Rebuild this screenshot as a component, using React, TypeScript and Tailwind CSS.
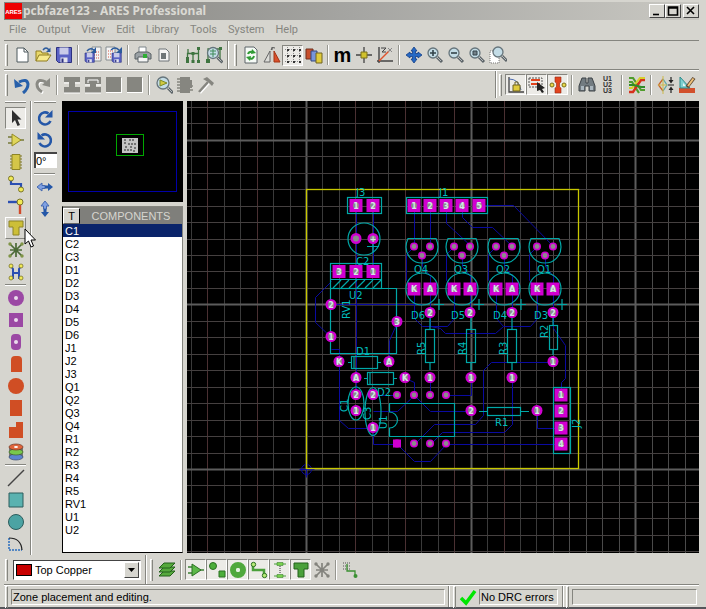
import { useState } from 'react';
import type { ReactNode } from 'react';
import clsx from 'clsx';

const components = [
  'C1', 'C2', 'C3', 'D1', 'D2', 'D3', 'D4', 'D5', 'D6', 'J1', 'J2', 'J3',
  'Q1', 'Q2', 'Q3', 'Q4', 'R1', 'R2', 'R3', 'R4', 'R5', 'RV1', 'U1', 'U2',
];

const menus = ['File', 'Output', 'View', 'Edit', 'Library', 'Tools', 'System', 'Help'];

const Icon = ({ children }: { children: ReactNode }) => (
  <svg viewBox="0 0 18 18" className="size-[18px] shrink-0" fill="none" aria-hidden="true">
    {children}
  </svg>
);

/* ---------- shared icon parts ---------- */

const Lens = ({ x = 7, y = 7, r = 5 }: { x?: number; y?: number; r?: number }) => (
  <>
    <path d={`M${x + r - 1} ${y + r - 1}L${x + r + 4} ${y + r + 4}`} stroke="#5c6468" strokeWidth="3" />
    <path d={`M${x + r - 1} ${y + r - 1}L${x + r + 3} ${y + r + 3}`} stroke="#b4babc" />
    <circle cx={x} cy={y} r={r} fill="#c3dce6" stroke="#66757c" strokeWidth="1.3" />
  </>
);

const Floppy = ({ x, y, s }: { x: number; y: number; s: number }) => (
  <g transform={`translate(${x} ${y}) scale(${s})`}>
    <path d="M0 0H15V15H2L0 13Z" fill="#5a62c4" stroke="#2c3180" />
    <path d="M3 0H12V7H3Z" fill="#c9cbe8" />
    <path d="M4 10H11V15H4Z" fill="#e4e4ee" />
    <path d="M5 11H7V15H5Z" fill="#2c3180" />
  </g>
);

const RotateArrow = () => (
  <>
    <path d="M14.5 12A6 6 0 1 1 12.5 4.5" stroke="#2457a8" strokeWidth="2.6" />
    <path d="M16.5 1V8.5H9Z" fill="#2457a8" />
  </>
);

const Tee = ({ fill, stroke }: { fill: string; stroke: string }) => (
  <path d="M2 2H16V8H12V16H6V8H2Z" fill={fill} stroke={stroke} />
);

const Ratsnest = ({ color, dot }: { color: string; dot: string }) => (
  <>
    <path d="M3 3L15 15M15 3L3 15M9 2V16M3 9H15" stroke={color} strokeWidth="1.7" />
    {[[3, 3], [15, 3], [3, 15], [15, 15]].map(([x, y]) => (
      <circle key={`${x}-${y}`} cx={x} cy={y} r="1.7" fill={dot} />
    ))}
  </>
);

const Block = () => (
  <Icon>
    <path d="M1 2H17V17H1Z" fill="#fff" />
    <path d="M1 1H16V16H1Z" fill="#868680" />
  </Icon>
);

/* ---------- icons ---------- */

const icons: Record<string, ReactNode> = {
  'New layout': <Icon><path d="M4 2H11L15 6V16H4Z" fill="#fff" stroke="#4d585c" /><path d="M11 2V6H15" stroke="#4d585c" /></Icon>,
  'Open layout': (
    <Icon>
      <path d="M2 15V5H7L8 7H14V9" fill="#e9d86a" stroke="#8f7d20" />
      <path d="M2 15L5 9H17L13 15Z" fill="#f7ea8c" stroke="#8f7d20" />
      <path d="M9 4Q12 0 15 4" stroke="#2b5a9c" strokeWidth="1.4" /><path d="M16.5 1.5V6H12Z" fill="#2b5a9c" />
    </Icon>
  ),
  'Save layout': <Icon><Floppy x={1.5} y={1.5} s={1} /></Icon>,
  'Import region': (
    <Icon>
      <path d="M8 1H17V15H8Z" fill="#f4f4f4" stroke="#858c90" /><path d="M10 6H16M10 9H16M10 12H16" stroke="#d65442" strokeDasharray="1 1" />
      <Floppy x={1} y={7} s={0.62} /><path d="M3 5Q6 1 10 4" stroke="#2b5a9c" strokeWidth="1.5" /><path d="M12 1V7H7Z" fill="#2b5a9c" />
    </Icon>
  ),
  'Export region': (
    <Icon>
      <path d="M1 1H10V14H1Z" fill="#f4f4f4" stroke="#858c90" /><path d="M3 5H9M3 8H9M3 11H9" stroke="#d65442" strokeDasharray="1 1" />
      <Floppy x={7} y={7} s={0.62} /><path d="M6 4Q10 0 14 4" stroke="#2b5a9c" strokeWidth="1.5" /><path d="M17 1V7H11Z" fill="#2b5a9c" />
    </Icon>
  ),
  Print: (
    <Icon>
      <path d="M5 1H12V7H5Z" fill="#fff" stroke="#7c858a" /><path d="M1 8L4 6H14L17 8V13H1Z" fill="#9aa1a5" stroke="#596064" />
      <path d="M4 11H14V16H4Z" fill="#f6f6f6" stroke="#596064" /><path d="M9 8H13V12H9Z" fill="#2fae35" />
    </Icon>
  ),
  'Set print area': <Icon><path d="M4 3H11L14 6V15H4Z" fill="#f4f4f4" stroke="#6e7578" /><path d="M6 7H11V13H6Z" fill="#6e7578" /></Icon>,
  'Design explorer': (
    <Icon>
      <path d="M3.5 15V7.5H14.5V15M9 7.5V15M4 7V3M14.5 7V3" stroke="#3e7440" strokeWidth="1.3" />
      <path d="M2 11H5V14H2ZM2 14H5V17H2ZM7.5 14H10.5V17H7.5ZM13 14H16V17H13ZM13 1H16V4H13ZM7.5 6H10.5V9H7.5Z" fill="#3e7440" />
    </Icon>
  ),
  'Search netlist': (
    <Icon>
      <path d="M3 16V3H15V14" stroke="#3e7440" strokeWidth="1.3" /><path d="M1 13H5V17H1ZM14 1H17V4H14Z" fill="#3e7440" />
      <Lens x={8} y={7} r={5.5} /><path d="M5 5H11M5 8H11M8 3V11" stroke="#3e8a58" />
    </Icon>
  ),
  Redraw: (
    <Icon>
      <path d="M3 1H12L15 4V17H3Z" fill="#f6faf6" stroke="#5c6468" />
      <path d="M6 8Q7 5 11 6M12 10Q11 14 7 12" stroke="#2f9a34" strokeWidth="2" /><path d="M10 3L14 7L9 8ZM8 15L4 11L9 10Z" fill="#2f9a34" />
    </Icon>
  ),
  'Flip board': (
    <Icon>
      <path d="M7 5V16H1Z" fill="#dcdcd8" stroke="#666" /><path d="M11 5V16H17Z" fill="#d9502b" stroke="#a33415" /><path d="M8 4Q9 0 12 2M9 4V1" stroke="#555" />
    </Icon>
  ),
  Grid: (
    <Icon>
      <path d="M1 3.5H17M1 9.5H17M1 15.5H17M3.5 1V17M9.5 1V17M15.5 1V17" stroke="#8a8a8a" strokeDasharray="1 1" />
      <path d="M3 3H5V5H3ZM9 3H11V5H9ZM15 3H17V5H15ZM3 9H5V11H3ZM9 9H11V11H9ZM15 9H17V11H15ZM3 15H5V17H3ZM9 15H11V17H9ZM15 15H17V17H15Z" fill="#333" />
    </Icon>
  ),
  'Layer colours': (
    <Icon>
      <path d="M1 3H8V13H1Z" fill="#c8502c" stroke="#70301e" /><path d="M6 5H12V15H6Z" fill="#7895da" stroke="#34487e" /><path d="M11 7H17V17H11Z" fill="#e0cb3c" stroke="#6e6220" />
    </Icon>
  ),
  Metric: <span className="text-[20px] leading-[18px] font-bold text-black">m</span>,
  'Set origin': <Icon><path d="M9 1V17M1 9H17" stroke="#444" strokeWidth="1.3" /><path d="M6 6H12V12H6Z" fill="#d1c22c" stroke="#7a701a" /></Icon>,
  'Polar coordinates': (
    <Icon>
      <path d="M3 1V17M1 15H17" stroke="#444" strokeWidth="1.4" /><path d="M3 15L13 5" stroke="#e0532c" strokeWidth="1.4" />
      <path d="M5 2H10L6 6H10" stroke="#444" /><path d="M12 2L16 6M16 2L12 6" stroke="#888" />
    </Icon>
  ),
  Pan: <Icon><path d="M9 1L12 5H10.5V7.5H13V6L17 9L13 12V10.5H10.5V13H12L9 17L6 13H7.5V10.5H5V12L1 9L5 6V7.5H7.5V5H6Z" fill="#2669c4" stroke="#143f86" strokeWidth=".8" /></Icon>,
  'Zoom in': <Icon><Lens /><path d="M4 7H10M7 4V10" stroke="#33434a" strokeWidth="1.6" /></Icon>,
  'Zoom out': <Icon><Lens /><path d="M4 7H10" stroke="#33434a" strokeWidth="1.6" /></Icon>,
  'Zoom all': <Icon><Lens /><path d="M5 5H9V9H5Z" fill="#728088" stroke="#33434a" /></Icon>,
  'Zoom area': <Icon><path d="M1 5H10V17H1Z" fill="#fff" stroke="#777" strokeDasharray="1 1" /><Lens x={9} y={6} /></Icon>,
  Undo: <Icon><path d="M6 6Q14 2 15 8Q15 13 10 17" stroke="#2760aa" strokeWidth="3" /><path d="M1 3L2 12L10 10Z" fill="#2760aa" /></Icon>,
  Redo: <Icon><path d="M13 7Q5 3 4 9Q4 14 9 17" stroke="#fff" strokeWidth="3" /><path d="M12 6Q4 2 3 8Q3 13 8 16" stroke="#8a8a84" strokeWidth="3" /><path d="M16 2L16 11L8 9Z" fill="#8a8a84" /></Icon>,
  'Block copy': <Icon><path d="M1 1H17V6H12V11H17V17H1V11H6V6H1Z" fill="#868680" /><path d="M1 7H6M12 7H17M1 17H17" stroke="#fff" /></Icon>,
  'Block move': <Icon><path d="M1 1H17V8H12V11H17V17H1V11H6V8H1Z" fill="#868680" /><path d="M4 7V4H14V7M1 9H6M12 9H17M1 17H17" stroke="#fff" /></Icon>,
  'Block rotate': <Block />,
  'Block delete': <Block />,
  'Pick parts': <Icon><Lens x={8} y={7} r={6} /><path d="M5 4V10L12 7Z" fill="#d1c940" stroke="#7b8a2a" /></Icon>,
  'Make package': <Icon><path d="M4 1H14V4H16V12H14V17H4Z" fill="#868680" /><path d="M1 3H5M1 6H5M1 9H5M1 12H5M1 15H5M13 14H17M13 10H17" stroke="#868680" strokeWidth="1.4" /></Icon>,
  Decompose: <Icon><path d="M3 17L12 7" stroke="#fff" strokeWidth="2.5" /><path d="M2 16L11 6" stroke="#868680" strokeWidth="2.5" /><path d="M6 3L10 1L17 7L15 10L11 6Z" fill="#868680" /></Icon>,
  'Trace angle lock': (
    <Icon><path d="M2 1V16H17" stroke="#444" strokeWidth="1.3" /><path d="M2 3Q12 3 14 14" stroke="#4c6bb0" /><path d="M6 9H13V15H6Z" fill="#e0cb3c" stroke="#6e6220" /><path d="M8 9V6H11V9" stroke="#6e6220" /></Icon>
  ),
  'Auto track necking': (
    <Icon><path d="M1 2H14V11H1Z" stroke="#555" strokeDasharray="2 1" /><path d="M3 4H12M3 8H12" stroke="#e2441e" strokeWidth="2" /><path d="M9 6L17 12L14 13L16 16L14 17L12 14L9 15Z" fill="#222" /></Icon>
  ),
  'Auto trace selection': (
    <Icon><path d="M6 1H12V6L10.5 7V11L12 12V17H6V12L7.5 11V7L6 6Z" fill="#e2441e" stroke="#972a10" strokeWidth=".6" /><circle cx="3" cy="9" r="2" fill="#e8d94a" stroke="#7a701a" /><circle cx="15" cy="9" r="2" fill="#e8d94a" stroke="#7a701a" /></Icon>
  ),
  'Search and tag': (
    <Icon><path d="M4 2H8V7H10V2H14L17 10V15H11V10H7V15H1V10Z" fill="#727b80" stroke="#3c4246" /><path d="M3 10H6V14H3ZM12 10H15V14H12Z" fill="#aab6be" /></Icon>
  ),
  'Auto name': (
    <span className="flex flex-col text-[7px] leading-[6px] font-bold text-[#333]"><span>U1</span><span>U2</span><span>U3</span></span>
  ),
  'Auto router': (
    <Icon>
      <path d="M1 2H5L13 14H17M1 6H4L11 17" stroke="#4f9c2c" strokeWidth="2.2" /><path d="M1 16H5L13 4H17" stroke="#d6311c" strokeWidth="2.4" />
      <path d="M1 12H4L12 2H17" stroke="#d7cf2b" strokeWidth="2" /><path d="M1 9H6L13 11H17" stroke="#2f8c28" strokeWidth="2" />
    </Icon>
  ),
  'Design rule check': (
    <Icon><path d="M6 3L1.5 9L6 15" stroke="#c8652c" strokeWidth="1.3" /><path d="M6 3L10 9L6 15" stroke="#62a8a6" strokeWidth="1.3" /><path d="M6 0V18M1 9H10" stroke="#ccb94a" /><path d="M14 1V5M14 13V17M11 9H17" stroke="#222" strokeWidth="1.2" /><path d="M11.5 4H16.5L14 7.5ZM11.5 14H16.5L14 10.5Z" fill="#222" /></Icon>
  ),
  'Pre-production check': (
    <Icon><path d="M1 12H17V17H1Z" fill="#d2502c" /><path d="M2 1V12H12Z" fill="#7ed1cf" stroke="#2c8b8b" /><path d="M5 7V10H8Z" fill="#e8f6f6" /><path d="M16 2L9 11" stroke="#5a4530" strokeWidth="3.6" /><path d="M15.5 2.5L10 10" stroke="#efc179" strokeWidth="2" /></Icon>
  ),

  /* left toolbox */
  Selection: <Icon><path d="M5 1V14L8 11L10.5 17L13 16L10.5 10.5H14.5Z" fill="#2e2e2e" /></Icon>,
  Component: <Icon><path d="M1 6H5M1 12H5M13 9H17" stroke="#777a3a" strokeWidth="1.3" /><path d="M5 3V15L14 9Z" fill="#e0d65a" stroke="#938a26" /></Icon>,
  Package: <Icon><path d="M3 3H15M3 6H15M3 9H15M3 12H15M3 15H15" stroke="#7c7626" strokeWidth="1.2" /><path d="M5 1.5H13V16.5H5Z" fill="#d4c648" stroke="#8d8426" /></Icon>,
  Track: <Icon><path d="M4 3V9H14V15" stroke="#2b4fb2" strokeWidth="2.2" /><circle cx="4" cy="3.5" r="2.5" fill="#f1ea56" stroke="#7a742a" /><circle cx="14" cy="14.5" r="2.5" fill="#f1ea56" stroke="#7a742a" /></Icon>,
  Via: <Icon><path d="M1 5H13" stroke="#2b4fb2" strokeWidth="2.4" /><path d="M13 6V17" stroke="#d14a2a" strokeWidth="2.4" /><circle cx="13" cy="5" r="3" fill="#f1ea56" stroke="#7a742a" /></Icon>,
  Zone: <Icon><Tee fill="#cdbf37" stroke="#8d8426" /></Icon>,
  Ratsnest: <Icon><Ratsnest color="#4b6a37" dot="#7f9445" /></Icon>,
  'Connectivity highlight': (
    <Icon>
      <path d="M4 3L6 6V16M14 3L12 6V16M6 10H12" stroke="#2b4fb2" strokeWidth="2" />
      {[[4, 3], [14, 3], [4, 15], [14, 15]].map(([x, y]) => <circle key={`${x}${y}`} cx={x} cy={y} r="2" fill="#f1ea56" stroke="#7a742a" strokeWidth=".8" />)}
    </Icon>
  ),
  'Round pad': <Icon><circle cx="9" cy="9" r="8" fill="#9b48a4" /><circle cx="9" cy="9" r="2" fill="#eadcec" /></Icon>,
  'Square pad': <Icon><path d="M2 2H16V16H2Z" fill="#9b48a4" /><circle cx="9" cy="9" r="2" fill="#eadcec" /></Icon>,
  'DIL pad': <Icon><rect x="4" y="1" width="10" height="16" rx="4" fill="#9b48a4" /><circle cx="9" cy="9" r="2" fill="#eadcec" /></Icon>,
  'Edge pad': <Icon><path d="M4 17V5Q4 1 8 1H11Q15 1 15 5V17Z" fill="#d04e24" /></Icon>,
  'Round SMT pad': <Icon><circle cx="9" cy="9" r="8" fill="#d04e24" /></Icon>,
  'Rectangular SMT pad': <Icon><path d="M3 1H15V17H3Z" fill="#d04e24" /></Icon>,
  'Polygonal SMT pad': <Icon><path d="M2 17V6H9V1H16V17Z" fill="#d04e24" /></Icon>,
  Padstack: (
    <Icon>
      <path d="M2 14V5H16V14" fill="#777" /><ellipse cx="9" cy="14" rx="7" ry="3" fill="#5d84cf" stroke="#3a4a6c" strokeWidth=".7" />
      <ellipse cx="9" cy="9" rx="7" ry="3" fill="#78c84c" stroke="#41602c" strokeWidth=".7" /><ellipse cx="9" cy="4" rx="7" ry="3" fill="#e0653c" stroke="#713722" strokeWidth=".7" /><ellipse cx="9" cy="4" rx="2" ry="1" fill="#fff" />
    </Icon>
  ),
  Line: <Icon><path d="M1 17L17 1" stroke="#444" strokeWidth="1.5" /></Icon>,
  Box: <Icon><path d="M2 2H16V16H2Z" fill="#5ab2b0" stroke="#2c5c5c" /></Icon>,
  Circle: <Icon><circle cx="9" cy="9" r="7.5" fill="#4ba3a3" stroke="#2c5c5c" /></Icon>,
  Arc: <Icon><path d="M2 3V15H15" stroke="#2a6ec0" strokeWidth="1.5" strokeDasharray="2 1" /><path d="M2 3Q14 3 15 15" stroke="#222" strokeWidth="1.2" /></Icon>,

  /* rotation column */
  'Rotate clockwise': <Icon><RotateArrow /></Icon>,
  'Rotate anti-clockwise': <Icon><g transform="translate(18 0) scale(-1 1)"><RotateArrow /></g></Icon>,
  'Mirror X': <Icon><path d="M1 9L6 5V7.5H9V10.5H6V13Z" fill="#7fa0e2" stroke="#4468b0" /><path d="M17 9L12 5V7.5H9V10.5H12V13Z" fill="#2457a8" /></Icon>,
  'Mirror Y': <Icon><path d="M9 1L5 6H7.5V9H10.5V6H13Z" fill="#7fa0e2" stroke="#4468b0" /><path d="M9 17L5 12H7.5V9H10.5V12H13Z" fill="#2457a8" /></Icon>,

  /* selection filter */
  Layers: (
    <Icon>
      {[12, 8, 4].map((y) => <path key={y} d={`M1 ${y + 3}L6 ${y - 2}H17L12 ${y + 3}Z`} fill="#55a83c" stroke="#22601a" />)}
    </Icon>
  ),
  'Filter components': <Icon><path d="M1 6H6M1 12H6M13 9H17" stroke="#3b8034" strokeWidth="1.3" /><path d="M5 3V15L14 9Z" fill="#5cb848" stroke="#2b7022" /></Icon>,
  'Filter graphics': <Icon><circle cx="5" cy="5" r="3.5" fill="#4cae3a" stroke="#2b7022" /><path d="M11 10H17V16H11Z" fill="#4cae3a" stroke="#2b7022" /></Icon>,
  'Filter pads': <Icon><circle cx="9" cy="9" r="5" stroke="#4fa83c" strokeWidth="6" /><circle cx="9" cy="9" r="2" fill="#e4f2e0" /></Icon>,
  'Filter tracks': <Icon><path d="M3 4V9H14V14" stroke="#4aa03a" strokeWidth="2.5" /><circle cx="3.5" cy="3.5" r="2.2" fill="#b7ea78" stroke="#2b7022" /><circle cx="14.5" cy="14.5" r="2.2" fill="#b7ea78" stroke="#2b7022" /></Icon>,
  'Filter vias': <Icon><path d="M3 3H15M3 15H15" stroke="#4aa03a" strokeWidth="1.2" /><path d="M6 1.5H12V4.5H6ZM6 13.5H12V16.5H6Z" fill="#79d24e" stroke="#2b7022" strokeWidth=".5" /><path d="M9 5V13" stroke="#333" strokeDasharray="1 1" /></Icon>,
  'Filter zones': <Icon><Tee fill="#4aa03a" stroke="#22601a" /></Icon>,
  'Filter ratsnest': <Icon><Ratsnest color="#83837d" dot="#83837d" /></Icon>,
  'Track route': <Icon><path d="M1 2H9M1 5H9M1 8H9" stroke="#555" strokeDasharray="1 1" /><path d="M5 3V10H13V14" stroke="#3b9032" strokeWidth="1.3" /><circle cx="13.5" cy="15" r="2" fill="#3b9032" /></Icon>,
};

/* ---------- chrome ---------- */

const ToolButton = ({ name, pressed, raised, tall }: { name: string; pressed?: boolean; raised?: boolean; tall?: boolean }) => (
  <button
    type="button"
    title={name}
    aria-label={name}
    aria-pressed={pressed}
    className={clsx(
      'flex w-[21px] shrink-0 items-center justify-center border',
      tall ? 'h-[22px]' : 'h-[21px]',
      pressed && 'border-t-[#85857f] border-r-white border-b-white border-l-[#85857f] bg-[#ecebe7]',
      raised && 'border-t-white border-r-[#85857f] border-b-[#85857f] border-l-white',
      !pressed && !raised && 'border-transparent',
    )}
  >
    {icons[name]}
  </button>
);

const Grip = () => (
  <span className="mr-[3px] ml-px h-[22px] w-[3px] shrink-0 border-t border-r border-l border-t-white border-r-[#85857f] border-l-white" />
);

const Sep = () => (
  <span className="mx-[3px] h-[20px] w-[2px] shrink-0 border-r border-l border-r-white border-l-[#96968f]" />
);

const Divider = () => (
  <span className="w-[2px] shrink-0 self-stretch border-r border-l border-r-white border-l-[#85857f]" />
);

const HSep = () => (
  <span className="my-px h-[2px] w-[21px] border-t border-b border-t-[#85857f] border-b-white" />
);

/* '|' inserts a separator, a leading '*' draws the button pushed in */
const Tools = ({ names }: { names: string[] }) => (
  <>
    {names.map((name, i) =>
      name === '|' ? (
        <Sep key={i} />
      ) : (
        <ToolButton key={i} name={name.replace('*', '')} pressed={name.startsWith('*')} />
      ),
    )}
  </>
);

const TitleBar = () => (
  <header className="flex h-[18px] items-center bg-linear-to-r from-[#84837e] via-[#a5a5a2] to-[#c9c8c2] pl-px">
    <svg viewBox="0 0 17 16" className="h-4 w-[17px] shrink-0" aria-hidden="true">
      <rect width="17" height="16" fill="#e00" />
      <text x="8.5" y="10.5" textAnchor="middle" fontSize="6" fontWeight="bold" fill="#fff" fontFamily="Liberation Sans, sans-serif">ARES</text>
    </svg>
    <h1 className="ml-px flex-1 truncate font-['Noto_Sans',sans-serif] text-[12px] leading-4 font-bold text-[#dad9d3]">
      pcbfaze123 - ARES Professional
    </h1>
    <div className="flex">
      {[
        ['Minimize', 'M3 9.5H9'],
        ['Maximize', 'M2.5 2H11.5V10H2.5ZM2 3H12'],
        ['Close', 'M3 2L10 9M10 2L3 9'],
      ].map(([label, d]) => (
        <button
          key={label}
          type="button"
          aria-label={label}
          className={clsx(
            'h-[14px] w-4 border border-t-white border-r-[#444] border-b-[#444] border-l-white bg-[#d6d5cf]',
            label === 'Close' && 'ml-[2px]',
          )}
        >
          <svg viewBox="0 0 14 12" className="h-3 w-[14px]" fill="none" stroke="#000" strokeWidth="1.6">
            <path d={d} />
          </svg>
        </button>
      ))}
    </div>
  </header>
);

/* ---------- board ---------- */

const traces = [
  'M356 206V394', 'M373 206V271', 'M331 304H422', 'M331 281L315 297V322L331 337',
  'M414 206V246', 'M430 206V246', 'M446 206V223L471 246', 'M462 206V217L472 227H492L512 246',
  'M479 205H513L553 246', 'M414 289V318L422 326H447L454 318V289', 'M496 289V318L503 326H530L537 318V289',
  'M397 322L389 340V361', 'M331 349H339V420L348 428H373V444H397L414 461H430L446 444',
  'M405 378L414 382V395L397 411H373', 'M414 395L430 411H471', 'M430 378V395', 'M373 395H397',
  'M414 444L434 424H475L483 415V370L491 362H553', 'M430 444L442 432H504L512 424V378', 'M446 444H561',
  'M446 395H471V378', 'M537 411V428H561', 'M561 395V382L565 378V345L553 328V313', 'M430 313V326L440 328L445 333H495L503 326',
];

const transistors = [
  { x: 422, q: 'Q4', d: 'D6' },
  { x: 462, q: 'Q3', d: 'D5' },
  { x: 504, q: 'Q2', d: 'D4' },
  { x: 545, q: 'Q1', d: 'D3' },
];

const Pad = ({ x, y, n, square, small }: { x: number; y: number; n?: string; square?: boolean; small?: boolean }) => (
  <g>
    {square ? (
      <rect x={x - 6.5} y={y - 6.5} width="13" height="13" fill="#d000d0" />
    ) : (
      <circle cx={x} cy={y} r={small ? 4 : 5.5} fill="#d000d0" />
    )}
    <circle cx={x} cy={y} r={small ? 2.4 : 3} fill="#8b8b8b" />
    {n && (
      <text x={x} y={y + 3} textAnchor="middle" fontSize="8" fontWeight="bold" fill="#d6e6e6">{n}</text>
    )}
  </g>
);

const Label = ({ x, y, text, up }: { x: number; y: number; text: string; up?: boolean }) => (
  <text x={x} y={y} fontSize="10" fill="#00bcbc" transform={up ? `rotate(-90 ${x} ${y})` : undefined}>{text}</text>
);

const Board = () => {
  const cols = Array.from({ length: 32 }, (_, i) => i - 7);
  const rows = Array.from({ length: 29 }, (_, i) => i - 22);

  return (
    <svg
      viewBox="187 101 512 452"
      preserveAspectRatio="xMidYMid slice"
      className="block h-full w-full bg-black font-['DejaVu_Sans',sans-serif]"
      fill="none"
      role="img"
      aria-label="Board layout"
    >
      {cols.map((i) => (
        <path key={i} d={`M${306.5 + Math.round(i * 16.46)} 101V553`} stroke={i % 10 === 0 ? '#5c5c5c' : i > 14 ? '#4a4a4a' : i % 3 === 0 ? '#4a3032' : '#3a3a3a'} strokeWidth={i % 10 === 0 ? 2 : 1} />
      ))}
      {rows.map((i) => (
        <path key={i} d={`M187 ${469.5 + Math.round(i * 16.46)}H699`} stroke={i % 10 === 0 ? '#5c5c5c' : '#454040'} strokeWidth={i % 10 === 0 ? 2 : 1} />
      ))}

      <g stroke="#0a0aa0" transform="translate(.5 .5)">
        {traces.map((d) => <path key={d} d={d} />)}
        {transistors.map(({ x }) => (
          <path key={x} d={`M${x - 8} 246L${x - 16} 254V280L${x - 8} 289M${x} 256V266L${x + 8} 276V313`} />
        ))}
        <circle cx="306" cy="469" r="5" />
        <path d="M299 469H314M306 462V477" />
      </g>

      <rect x="306.5" y="189.5" width="272" height="279" stroke="#c8c800" strokeWidth="1.3" />

      <g stroke="#00a8a8" strokeWidth="1.2">
        <rect x="347.5" y="197.5" width="34" height="16" />
        <rect x="406.5" y="197.5" width="81" height="16" />
        <circle cx="364" cy="239" r="16" />
        <path d="M367 246.5H379M373 241V252" />
        <rect x="330.5" y="263.5" width="51" height="25" />
        <path d="M331 279.5H381M333 288L341 280M341 288L349 280M349 288L357 280M357 288L365 280M365 288L373 280M373 288L381 280" />
        <path d="M330.5 289V353.5H396.5V288.5H381" />
        <rect x="351.5" y="356.5" width="26" height="12" />
        <path d="M354 356V369M348 362.5H351M377 362.5H381" />
        <rect x="367.5" y="372.5" width="26" height="12" />
        <path d="M370 372V385M364 378.5H367M393 378.5H397" />
        <ellipse cx="356" cy="403.5" rx="8" ry="16.5" />
        <ellipse cx="373" cy="411.5" rx="8" ry="24" />
        <path d="M389.5 403.5H454.5V436.5H389.5V428A8 8 0 0 0 389.5 412Z" />
        <rect x="425.5" y="329.5" width="9" height="33" />
        <rect x="466.5" y="329.5" width="9" height="33" />
        <rect x="507.5" y="329.5" width="9" height="33" />
        <rect x="549.5" y="325.5" width="8" height="24" />
        <path d="M430 318V329M430 362V370M471 318V329M471 362V370M512 318V329M512 362V370M553 318V325M553 349V355" />
        <rect x="487.5" y="407.5" width="33" height="8" />
        <path d="M479 411.5H487M521 411.5H529" />
        <rect x="553.5" y="387.5" width="17" height="66" />
        {transistors.map(({ x }) => (
          <g key={x}>
            <path d={`M${x - 14} 238.5H${x + 14}Q${x + 16} 243 ${x + 16} 247A16 16 0 0 1 ${x - 16} 247Q${x - 16} 243 ${x - 14} 238.5Z`} />
            <circle cx={x} cy="289" r="16" />
            <path d={`M${x + 12} 304.5H${x + 22}M${x + 17} 299V310`} />
          </g>
        ))}
      </g>

      {['1', '2'].map((n, i) => <Pad key={n} x={356 + i * 17} y={205.5} n={n} square />)}
      {[414, 430, 446, 462, 479].map((x, i) => <Pad key={x} x={x} y={205.5} n={`${i + 1}`} square />)}
      {[339, 356, 373].map((x, i) => <Pad key={x} x={x} y={271.5} n={`${3 - i}`} square />)}
      {[395, 411, 428, 444].map((y, i) => <Pad key={y} x={561} y={y} n={`${i + 1}`} square />)}
      <Pad x={356} y={238.5} />
      <Pad x={373} y={238.5} n="+" />
      <Pad x={331} y={304.5} n="2" />
      <Pad x={397} y={321.5} n="3" />
      <Pad x={331} y={336.5} n="1" />
      <Pad x={339} y={361.5} n="K" />
      <Pad x={389} y={361.5} n="A" />
      <Pad x={356} y={377.5} n="A" />
      <Pad x={405} y={377.5} n="K" />
      <Pad x={356} y={394.5} n="2" />
      <Pad x={356} y={410.5} n="1" />
      <Pad x={373} y={394.5} n="2" />
      <Pad x={373} y={427.5} n="1" />
      <Pad x={471} y={410.5} n="2" />
      <Pad x={537} y={410.5} n="1" />
      {[430, 471, 512].map((x) => <Pad key={x} x={x} y={377.5} n="1" />)}
      <Pad x={553} y={361.5} n="1" />
      {[397, 414, 430, 446].map((x) => (
        <g key={x}>
          <Pad x={x} y={395} small />
          <Pad x={x} y={443.5} small />
        </g>
      ))}
      <rect x="395" y="441.5" width="4" height="4" stroke="#d000d0" strokeWidth="4" />
      {transistors.map(({ x, q, d }) => (
        <g key={x}>
          <Pad x={x - 8} y={246.5} small />
          <Pad x={x + 8} y={246.5} small />
          <Pad x={x} y={255.5} small />
          <Pad x={x - 8} y={289} n="K" square />
          <Pad x={x + 8} y={289} n="A" square />
          <Pad x={x + 8} y={312.5} n="2" />
          <Label x={x - 8} y={273} text={q} />
          <Label x={x - 11} y={319} text={d} />
        </g>
      ))}

      <Label x={356} y={196} text="J3" />
      <Label x={439} y={196} text="J1" />
      <Label x={356} y={265} text="C2" />
      <Label x={349} y={299} text="U2" />
      <Label x={356} y={355} text="D1" />
      <Label x={377} y={396} text="D2" />
      <Label x={495} y={426} text="R1" />
      <Label x={350} y={319} text="RV1" up />
      <Label x={348} y={412} text="C1" up />
      <Label x={371} y={420} text="C3" up />
      <Label x={387} y={429} text="U1" up />
      <Label x={425} y={355} text="R5" up />
      <Label x={466} y={355} text="R4" up />
      <Label x={507} y={355} text="R3" up />
      <Label x={548} y={338} text="R2" up />
      <Label x={580} y={428} text="J2" up />
    </svg>
  );
};

const Overview = () => (
  <svg viewBox="0 0 121 101" className="block h-[101px] w-full bg-black" fill="none" role="img" aria-label="Overview">
    <rect x="6.5" y="10.5" width="108" height="80" stroke="#0000a8" />
    <rect x="54.5" y="33.5" width="27" height="21" stroke="#00a800" />
    <rect x="60" y="37" width="16" height="15" fill="#c4c4c4" />
    <path d="M62 39H65M67 39H72M62 42H64M66 43H74M63 46H66M69 45V50M72 47H75M62 49H67M71 50H74" stroke="#222" strokeDasharray="2 1" />
  </svg>
);

const ComponentList = () => {
  const [current, setCurrent] = useState('C1');

  return (
    <section className="flex flex-1 flex-col border border-t-[#85857f] border-r-[#85857f] border-b-black border-l-black bg-white">
      <div className="flex h-[17px] items-center bg-[#7f7f7b]">
        <button type="button" aria-label="Pick from library" className="h-[16px] w-[17px] border border-t-white border-r-black border-b-[#666] border-l-white bg-[#d6d5cf] text-[11px] leading-[14px] text-black">
          T
        </button>
        <h2 className="flex-1 text-center text-[11px] leading-4 text-[#d6d5cf]">COMPONENTS</h2>
      </div>
      <ul>
        {components.map((name) => (
          <li key={name}>
            <button
              type="button"
              onClick={() => setCurrent(name)}
              className={clsx(
                'block h-[13px] w-full pl-[2px] text-left text-[11px] leading-[14px]',
                name === current ? 'bg-[#0a246a] text-white' : 'text-black',
              )}
            >
              {name}
            </button>
          </li>
        ))}
      </ul>
    </section>
  );
};

const field = 'h-4 truncate border border-t-[#85857f] border-r-white border-b-white border-l-[#85857f] px-px text-[11px] leading-[14px] text-black';

export default function App() {
  return (
    <div className="flex min-h-screen flex-col border-b-2 border-[#55555a] bg-[#d6d5cf] pt-[2px] pr-[7px] pl-1 font-['Liberation_Sans',Arial,sans-serif]">
      <TitleBar />

      <nav className="flex h-[20px] items-center gap-[11px] pl-[5px] font-['Roboto',sans-serif] text-[11px] leading-4 text-[#85857f]">
        {menus.map((menu) => (
          <button key={menu} type="button">{menu}</button>
        ))}
      </nav>

      <div className="flex h-[30px] items-center border-t border-b border-[#85857f]">
        <Grip />
        <Tools names={['New layout', 'Open layout', 'Save layout', '|', 'Import region', 'Export region', '|', 'Print', 'Set print area', '|', 'Design explorer', 'Search netlist']} />
        <span className="w-[3px]" />
        <Divider />
        <span className="w-[4px]" />
        <Grip />
        <Tools names={['Redraw', 'Flip board', '*Grid', 'Layer colours', '|', 'Metric', 'Set origin', 'Polar coordinates', '|', 'Pan', 'Zoom in', 'Zoom out', 'Zoom all', 'Zoom area']} />
      </div>

      <div className="flex h-[28px] items-center border-t border-white">
        <Grip />
        <Tools names={['Undo', 'Redo', '|', 'Block copy', 'Block move', 'Block rotate', 'Block delete', '|', 'Pick parts', 'Make package', 'Decompose']} />
        <span className="flex-1" />
        <Divider />
        <span className="w-px" />
        <Grip />
        <Tools names={['*Trace angle lock', '*Auto track necking', '*Auto trace selection', '|', 'Search and tag', 'Auto name', '|', 'Auto router', '|', 'Design rule check', 'Pre-production check']} />
        <span className="w-[2px]" />
      </div>

      <main className="flex flex-1 pt-[3px]">
        <div className="flex w-[26px] shrink-0 flex-col pl-px">
          <span className="mb-1 h-[2px] w-[21px] border-t border-b border-t-white border-b-[#85857f]" />
          {['Selection', 'Component', 'Package', 'Track', 'Via', 'Zone', 'Ratsnest', 'Connectivity highlight'].map((name) => (
            <ToolButton key={name} name={name} tall pressed={name === 'Selection'} raised={name === 'Zone'} />
          ))}
          <HSep />
          {['Round pad', 'Square pad', 'DIL pad', 'Edge pad', 'Round SMT pad', 'Rectangular SMT pad', 'Polygonal SMT pad', 'Padstack'].map((name) => (
            <ToolButton key={name} name={name} tall />
          ))}
          <HSep />
          {['Line', 'Box', 'Circle', 'Arc'].map((name) => (
            <ToolButton key={name} name={name} tall />
          ))}
        </div>
        <Divider />
        <div className="flex w-[30px] shrink-0 flex-col pl-[2px]">
          <span className="mb-1 h-[2px] w-[22px] border-t border-b border-t-white border-b-[#85857f]" />
          <ToolButton name="Rotate clockwise" tall />
          <ToolButton name="Rotate anti-clockwise" tall />
          <input
            aria-label="Rotation angle"
            defaultValue="0°"
            className="mt-px mb-1 h-4 w-[23px] border-t-2 border-l-2 border-[#444] bg-white text-[11px] leading-[14px] text-black"
          />
          <HSep />
          <ToolButton name="Mirror X" tall />
          <ToolButton name="Mirror Y" tall />
        </div>
        <aside className="mb-[2px] flex w-[121px] shrink-0 flex-col gap-1">
          <Overview />
          <ComponentList />
        </aside>
        <section className="mb-[2px] ml-1 min-w-0 flex-1">
          <Board />
        </section>
      </main>

      <div className="flex h-[30px] items-center border-b border-[#85857f]">
        <Grip />
        <div className="relative mr-1 ml-[2px] flex shrink-0">
          <select aria-label="Layer" className="h-5 w-[128px] appearance-none border border-t-[#444] border-r-white border-b-white border-l-[#444] bg-white pl-[21px] text-[11px] leading-4 text-black">
            <option>Top Copper</option>
            <option>Bottom Copper</option>
            <option>Top Silk</option>
          </select>
          <span className="pointer-events-none absolute top-[4px] left-[3px] h-3 w-4 border border-black bg-[#c80000]" />
          <span className="pointer-events-none absolute top-[2px] right-[2px] flex h-4 w-[15px] items-center justify-center border border-t-white border-r-[#444] border-b-[#444] border-l-white bg-[#d6d5cf]">
            <svg viewBox="0 0 7 4" className="h-1 w-[7px]"><path d="M0 0H7L3.5 4Z" /></svg>
          </span>
        </div>
        <Divider />
        <span className="w-[2px]" />
        <Grip />
        <Tools names={['Layers', '|', '*Filter components', '*Filter graphics', '*Filter pads', '*Filter tracks', '*Filter vias', '*Filter zones', 'Filter ratsnest', '|', 'Track route']} />
      </div>

      <footer className="flex h-[22px] items-center border-t border-white">
        <Grip />
        <p className={clsx(field, 'min-w-0 flex-1')}>Zone placement and editing.</p>
        <span className="w-[3px]" />
        <Divider />
        <span className="w-[2px]" />
        <Grip />
        <Icon><path d="M2 10L7 15L16 3" stroke="#00e600" strokeWidth="3.5" /></Icon>
        <p className={clsx(field, 'ml-[2px] w-[79px]')}>No DRC errors</p>
        <span className="w-[4px]" />
        <Divider />
        <span className="w-px" />
        <Grip />
        <p className={clsx(field, 'w-[125px]')} />
        <span className="w-[2px]" />
      </footer>

      {/* pointer hovering the zone tool */}
      <svg viewBox="0 0 12 20" className="pointer-events-none absolute top-[228px] left-[24px] h-5 w-3" aria-hidden="true">
        <path d="M1 1V16L4.5 13L7 19L9.5 18L7 12H11.5Z" fill="#fff" stroke="#000" />
      </svg>
    </div>
  );
}
